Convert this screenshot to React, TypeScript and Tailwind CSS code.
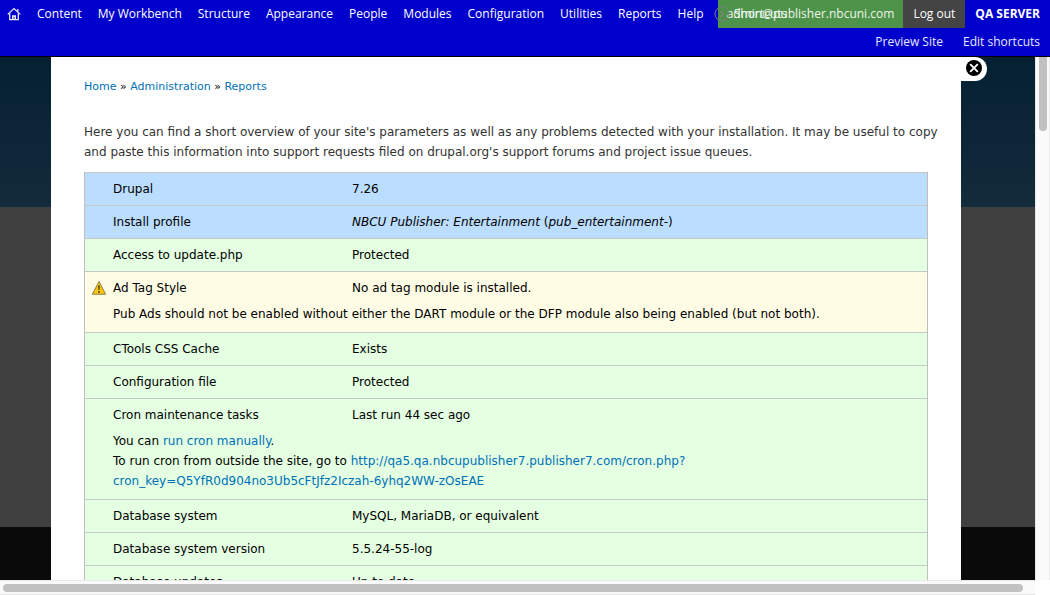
import React from "react";

const menu = ["Content", "My Workbench", "Structure", "Appearance", "People", "Modules", "Configuration", "Utilities", "Reports", "Help"];

type Row = { title: string; value: React.ReactNode; kind: "info" | "ok" | "warning"; description?: React.ReactNode };

const linkClass = "text-[#0071b8]";

const rows: Row[] = [
  { title: "Drupal", value: "7.26", kind: "info" },
  { title: "Install profile", value: (<><em>NBCU Publisher: Entertainment</em> (<em>pub_entertainment-</em>)</>), kind: "info" },
  { title: "Access to update.php", value: "Protected", kind: "ok" },
  { title: "Ad Tag Style", value: "No ad tag module is installed.", kind: "warning", description: "Pub Ads should not be enabled without either the DART module or the DFP module also being enabled (but not both)." },
  { title: "CTools CSS Cache", value: "Exists", kind: "ok" },
  { title: "Configuration file", value: "Protected", kind: "ok" },
  {
    title: "Cron maintenance tasks",
    value: "Last run 44 sec ago",
    kind: "ok",
    description: (
      <>
        You can <a href="#run-cron" className={linkClass}>run cron manually</a>.
        <br />
        To run cron from outside the site, go to{" "}
        <a href="#cron" className={linkClass}>
          http://qa5.qa.nbcupublisher7.publisher7.com/cron.php?
          <br />
          cron_key=Q5YfR0d904no3Ub5cFtJfz2Iczah-6yhq2WW-zOsEAE
        </a>
      </>
    ),
  },
  { title: "Database system", value: "MySQL, MariaDB, or equivalent", kind: "ok" },
  { title: "Database system version", value: "5.5.24-55-log", kind: "ok" },
  { title: "Database updates", value: "Up to date", kind: "ok" },
];

const tint = { info: "bg-[#bbddff]", ok: "bg-[#e4ffe2]", warning: "bg-[#fffce5]" };

function HomeIcon() {
  return (
    <svg viewBox="0 0 14 14" className="size-[14px]" fill="none" stroke="#e8e8ff" strokeWidth="1.3" aria-hidden="true">
      <path d="M0.8 7.4 7 1.6l6.2 5.8M10.8 4.8V2M2.7 6.5v6.2h8.6V6.5" />
      <path d="M5.8 12.5V9h2.4v3.5" strokeWidth="1.6" />
    </svg>
  );
}

function WarningIcon() {
  return (
    <svg viewBox="0 0 16 16" className="block size-4" role="img" aria-label="Warning">
      <path d="M8 1.5 14.6 14.2H1.4Z" fill="#f9c80e" stroke="#8a7a42" strokeWidth="1" strokeLinejoin="round" />
      <path d="M7 5.5h2l-.4 4.6H7.4Z" fill="#5a4a10" />
      <rect x="7.1" y="11" width="1.8" height="1.8" fill="#5a4a10" />
    </svg>
  );
}

function Toolbar() {
  return (
    <header className="shrink-0 border-b border-black bg-[#0000cd] font-['Open_Sans',sans-serif] text-[12px] leading-7 font-medium text-white">
      <div className="flex h-7 justify-between whitespace-nowrap">
        <div className="flex items-center gap-4 pl-[7px]">
          <a href="#home" aria-label="Home"><HomeIcon /></a>
          <nav className="flex gap-4" aria-label="Administration">
            {menu.map((m) => <a key={m} href="#menu">{m}</a>)}
          </nav>
        </div>
        <div className="flex">
          <div className="relative bg-[#4d9349] px-[9px] text-[#f0f5ef]">
            <a href="#account">admin@publisher.nbcuni.com</a>
            <a href="#shortcuts" className="absolute top-0 left-4">Shortcuts</a>
            <svg viewBox="0 0 16 16" className="absolute top-[6px] -left-1 size-4" fill="none" stroke="#808080" aria-hidden="true">
              <circle cx="8" cy="8" r="7" />
              <path d="m6.5 5 3 3-3 3" strokeWidth="1.4" />
            </svg>
          </div>
          <a href="#logout" className="bg-[#444] px-[10px]">Log out</a>
          <strong className="px-[10px] font-bold">QA SERVER</strong>
        </div>
      </div>
      <div className="flex h-7 justify-end gap-5 pr-[10px] text-[#e8e8ff]">
        <a href="#preview">Preview Site</a>
        <a href="#edit">Edit shortcuts</a>
      </div>
    </header>
  );
}

export default function App() {
  return (
    <div className="flex h-screen flex-col overflow-hidden bg-white">
      <Toolbar />
      <div className="flex min-h-0 flex-1">
        <div className="flex min-h-0 min-w-0 flex-1 overflow-hidden bg-[linear-gradient(180deg,#052033_0px,#132b3b_150px,#404040_150px,#404040_470px,#0a0a0a_470px)] pl-[51px]">
          <main className="h-max min-w-0 flex-1 bg-white px-[33px] pt-5 font-['DejaVu_Sans',sans-serif] text-[12px] leading-5 text-black">
            <nav aria-label="Breadcrumb" className="text-[11px]">
              <a href="#home" className={linkClass}>Home</a> » <a href="#admin" className={linkClass}>Administration</a> » <a href="#reports" className={linkClass}>Reports</a>
            </nav>
            <p className="-mr-5 mt-[25px] mb-[10px] text-[#333]">
              Here you can find a short overview of your site's parameters as well as any problems detected with your installation. It may be useful to copy and paste this information into support requests filed on drupal.org's support forums and project issue queues.
            </p>
            <table className="w-full table-fixed border-separate border-spacing-0 border-x border-b border-[#bebfb9] text-left">
              <colgroup>
                <col className="w-7" />
                <col className="w-[239px]" />
                <col />
              </colgroup>
              {rows.map((r) => (
                <tbody key={r.title} className={tint[r.kind]}>
                  <tr className="h-[33px]">
                    <td className="border-t border-[#c6c8c6] pl-[6px]">{r.kind === "warning" && <WarningIcon />}</td>
                    <th scope="row" className="border-t border-[#c6c8c6] font-normal">{r.title}</th>
                    <td className="border-t border-[#c6c8c6]">{r.value}</td>
                  </tr>
                  {r.description && (
                    <tr>
                      <td />
                      <td colSpan={2} className="pb-2">{r.description}</td>
                    </tr>
                  )}
                </tbody>
              ))}
            </table>
          </main>
          <div className="w-[74px] shrink-0">
            <button type="button" aria-label="Close" className="flex h-6 w-[26px] rounded-r-full bg-white pt-[3px] pl-[5px]">
              <svg viewBox="0 0 16 16" className="size-4" aria-hidden="true">
                <circle cx="8" cy="8" r="8" fill="#000" />
                <path d="m4.2 4.2 7.6 7.6M11.8 4.2l-7.6 7.6" stroke="#fff" strokeWidth="1.9" />
              </svg>
            </button>
          </div>
        </div>
        <div className="w-[15px] shrink-0 border-x border-[#e8e8e8] bg-[#fafafa] pl-[3px]">
          <div className="h-[74px] w-2 rounded-b-full bg-[#c1c1c1]" />
        </div>
      </div>
      <div className="mr-[15px] h-[15px] shrink-0 border-y border-[#e8e8e8] bg-[#fafafa] pt-[3px] pr-3 pl-[3px]">
        <div className="h-2 rounded-full bg-[#c1c1c1]" />
      </div>
    </div>
  );
}
